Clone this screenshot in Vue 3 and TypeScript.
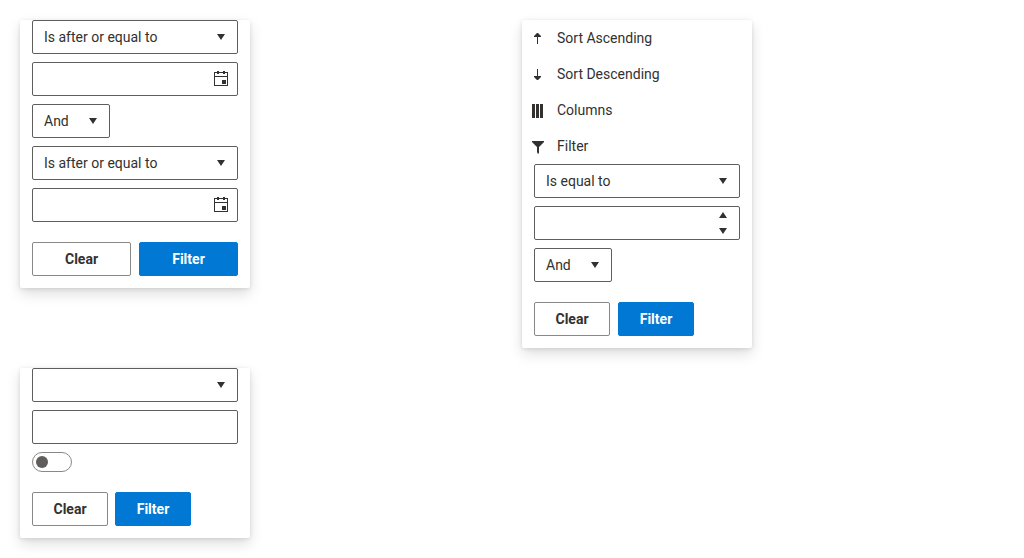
<script setup lang="ts">
import { ref } from 'vue'

const dateOperators = ['Is after or equal to', 'Is equal to', 'Is before or equal to']
const numberOperators = ['Is equal to', 'Is not equal to', 'Is greater than']
const logics = ['And', 'Or']

const firstOperator = ref('Is after or equal to')
const secondOperator = ref('Is after or equal to')
const dateLogic = ref('And')
const firstDate = ref('')
const secondDate = ref('')

const numberOperator = ref('Is equal to')
const numberLogic = ref('And')
const amount = ref('')

const customOperator = ref('')
const customText = ref('')
const customToggle = ref(false)

function step(delta: number) {
  amount.value = String((Number(amount.value) || 0) + delta)
}
function clearDates() {
  firstDate.value = ''
  secondDate.value = ''
}
function clearCustom() {
  customOperator.value = ''
  customText.value = ''
  customToggle.value = false
}
</script>

<template>
  <main class="board">
    <form class="card" @submit.prevent>
      <div class="fields">
        <div class="field">
          <select v-model="firstOperator" class="control" aria-label="First operator">
            <option v-for="o in dateOperators" :key="o">{{ o }}</option>
          </select>
          <svg class="caret" viewBox="0 0 16 16"><path d="M4 5h8l-4 6z" /></svg>
        </div>
        <div class="field">
          <input v-model="firstDate" class="control" type="text" aria-label="First date" />
          <button class="picker" type="button" aria-label="Open first calendar">
            <svg viewBox="0 0 16 16"><path fill-rule="evenodd" d="M1 1h3V0h2v1h4V0h2v1h3v14H1zM2 2v3h12V2h-2v1h-2V2H6v1H4V2zM2 6v8h12V6zM9 9h4v4H9z" /></svg>
          </button>
        </div>
        <div class="field short">
          <select v-model="dateLogic" class="control" aria-label="Logic">
            <option v-for="o in logics" :key="o">{{ o }}</option>
          </select>
          <svg class="caret" viewBox="0 0 16 16"><path d="M4 5h8l-4 6z" /></svg>
        </div>
        <div class="field">
          <select v-model="secondOperator" class="control" aria-label="Second operator">
            <option v-for="o in dateOperators" :key="o">{{ o }}</option>
          </select>
          <svg class="caret" viewBox="0 0 16 16"><path d="M4 5h8l-4 6z" /></svg>
        </div>
        <div class="field">
          <input v-model="secondDate" class="control" type="text" aria-label="Second date" />
          <button class="picker" type="button" aria-label="Open second calendar">
            <svg viewBox="0 0 16 16"><path fill-rule="evenodd" d="M1 1h3V0h2v1h4V0h2v1h3v14H1zM2 2v3h12V2h-2v1h-2V2H6v1H4V2zM2 6v8h12V6zM9 9h4v4H9z" /></svg>
          </button>
        </div>
      </div>
      <div class="actions stretched">
        <button class="btn" type="button" @click="clearDates">Clear</button>
        <button class="btn primary" type="submit">Filter</button>
      </div>
    </form>

    <form class="card" @submit.prevent>
      <div class="menu">
        <button class="item" type="button">
          <svg viewBox="0 0 16 16"><path d="M7 14V7H4V6l3-3h1l3 3v1H8v7z" /></svg>
          Sort Ascending
        </button>
        <button class="item" type="button">
          <svg viewBox="0 0 16 16"><path d="M7 3v7H4v1l3 3h1l3-3v-1H8V3z" /></svg>
          Sort Descending
        </button>
        <button class="item" type="button">
          <svg viewBox="0 0 16 16"><path d="M2 2h3v14H2zM6 2h3v14H6zM10 2h3v14h-3z" /></svg>
          Columns
        </button>
        <button class="item" type="button">
          <svg viewBox="0 0 16 16"><path d="M2 3h12v1L9 9v6l-1 1-1-2V9L2 4z" /></svg>
          Filter
        </button>
      </div>
      <div class="fields">
        <div class="field">
          <select v-model="numberOperator" class="control" aria-label="Number operator">
            <option v-for="o in numberOperators" :key="o">{{ o }}</option>
          </select>
          <svg class="caret" viewBox="0 0 16 16"><path d="M4 5h8l-4 6z" /></svg>
        </div>
        <div class="field">
          <input v-model="amount" class="control" type="text" inputmode="decimal" aria-label="Value" />
          <div class="spinner">
            <button type="button" aria-label="Increase value" @click="step(1)">
              <svg viewBox="0 0 16 16"><path d="M4 11h8L8 5z" /></svg>
            </button>
            <button type="button" aria-label="Decrease value" @click="step(-1)">
              <svg viewBox="0 0 16 16"><path d="M4 5h8l-4 6z" /></svg>
            </button>
          </div>
        </div>
        <div class="field short">
          <select v-model="numberLogic" class="control" aria-label="Logic">
            <option v-for="o in logics" :key="o">{{ o }}</option>
          </select>
          <svg class="caret" viewBox="0 0 16 16"><path d="M4 5h8l-4 6z" /></svg>
        </div>
      </div>
      <div class="actions">
        <button class="btn" type="button" @click="amount = ''">Clear</button>
        <button class="btn primary" type="submit">Filter</button>
      </div>
    </form>

    <form class="card" @submit.prevent>
      <div class="fields">
        <div class="field">
          <select v-model="customOperator" class="control" aria-label="Operator">
            <option value=""></option>
            <option v-for="o in numberOperators" :key="o">{{ o }}</option>
          </select>
          <svg class="caret" viewBox="0 0 16 16"><path d="M4 5h8l-4 6z" /></svg>
        </div>
        <div class="field">
          <input v-model="customText" class="control" type="text" aria-label="Text" />
        </div>
        <input v-model="customToggle" class="switch" type="checkbox" role="switch" aria-label="Enabled" />
      </div>
      <div class="actions tight">
        <button class="btn" type="button" @click="clearCustom">Clear</button>
        <button class="btn primary" type="submit">Filter</button>
      </div>
    </form>
  </main>
</template>

<style>
body {
  background: #fff;
}
</style>

<style scoped>
.board {
  display: grid;
  grid-template-columns: 1fr 1fr;
  align-items: start;
  gap: 20px;
  padding: 20px;
  font: 14px/20px Roboto, "Liberation Sans", sans-serif;
  color: #323130;
}
.card {
  width: 230px;
  padding-bottom: 12px;
  border-radius: 2px;
  background: #fff;
  box-shadow: 0 6px 14px rgba(0, 0, 0, 0.13), 0 1px 4px rgba(0, 0, 0, 0.11);
}
.fields {
  display: flex;
  flex-direction: column;
  gap: 8px;
  padding: 0 12px;
}
.field {
  position: relative;
  display: flex;
  box-sizing: border-box;
  height: 34px;
  border: 1px solid #605e5c;
  border-radius: 2px;
  background: #fff;
}
.short {
  width: 78px;
}
.control {
  appearance: none;
  flex: 1;
  min-width: 0;
  margin: 0;
  padding: 0 11px;
  border: 0;
  background: transparent;
  font: inherit;
  color: inherit;
  outline: none;
}
svg {
  display: block;
  flex: none;
  width: 16px;
  height: 16px;
  fill: #323130;
}
.caret {
  position: absolute;
  top: 8px;
  right: 8px;
  pointer-events: none;
}
.picker,
.spinner button {
  display: flex;
  align-items: center;
  justify-content: center;
  width: 32px;
  padding: 0;
  border: 0;
  background: transparent;
}
.spinner {
  display: flex;
  flex-direction: column;
}
.spinner button {
  flex: 1;
}
.menu {
  display: flex;
  flex-direction: column;
}
.item {
  display: flex;
  align-items: center;
  gap: 11px;
  height: 36px;
  padding: 0 8px;
  border: 0;
  background: transparent;
  font: inherit;
  color: inherit;
}
.switch {
  appearance: none;
  display: flex;
  align-items: center;
  box-sizing: border-box;
  width: 40px;
  height: 20px;
  margin: 0;
  padding: 0 3px;
  border: 1px solid #8a8886;
  border-radius: 10px;
}
.switch::before {
  content: "";
  width: 12px;
  height: 12px;
  border-radius: 50%;
  background: #605e5c;
}
.switch:checked {
  justify-content: flex-end;
}
.actions {
  display: flex;
  gap: 8px;
  padding: 20px 12px 0;
}
.tight {
  gap: 7px;
}
.btn {
  box-sizing: border-box;
  min-width: 76px;
  height: 34px;
  padding: 0 19px;
  border: 1px solid #8a8886;
  border-radius: 2px;
  background: #fff;
  font: inherit;
  font-weight: 700;
  color: inherit;
}
.stretched .btn {
  flex: 1;
}
.primary {
  border-color: #0078d4;
  background: #0078d4;
  color: #fff;
}
</style>
